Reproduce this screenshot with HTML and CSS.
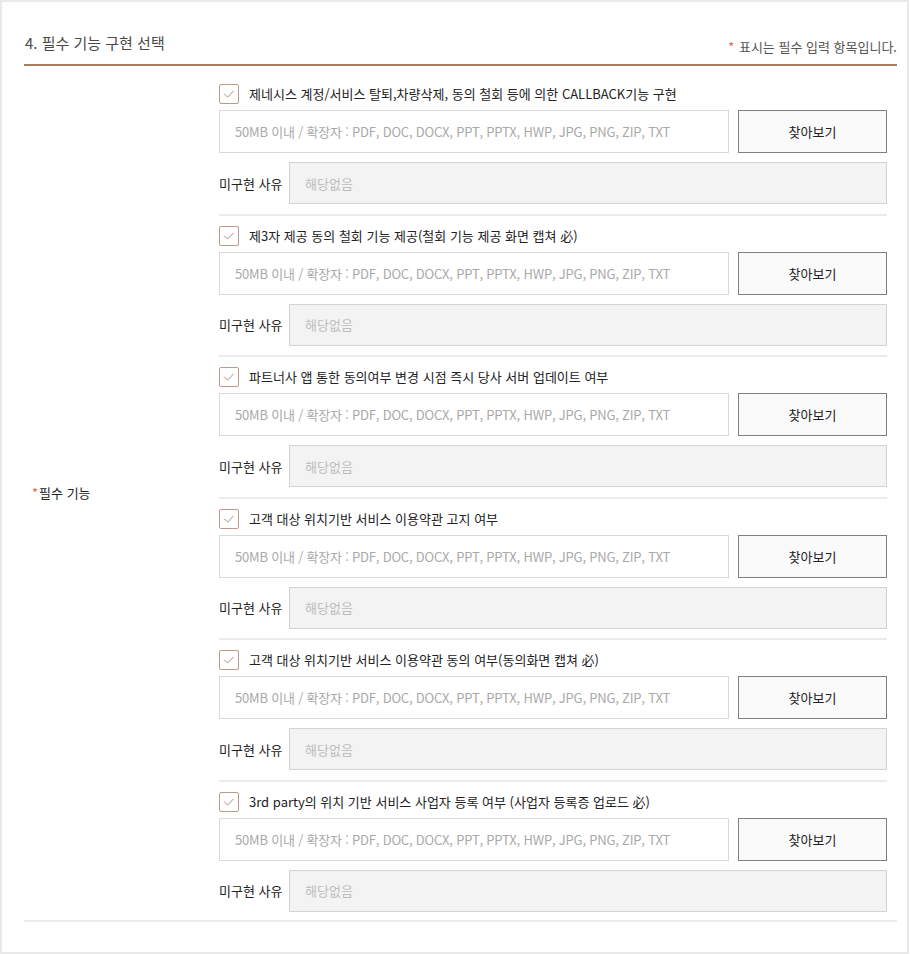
FILE: index.html
```html
<!DOCTYPE html>
<html lang="ko">
  <head>
    <meta charset="UTF-8" />
    <meta name="viewport" content="width=device-width, initial-scale=1.0" />
    <title>필수 기능 구현 선택</title>

    <link rel="stylesheet" href="styles.css">
  </head>

  <body>
    <div class="panel">
      <div class="panel-head">
        <h3>4. 필수 기능 구현 선택</h3>
        <p class="req-note"><span class="req">*</span> 표시는 필수 입력 항목입니다.</p>
      </div>

      <div class="form-table">
        <div class="form-label"><span class="req">*</span>필수 기능</div>

        <div class="form-body">
          <div class="feature">
            <label class="check">
              <span class="box"><svg viewBox="0 0 20 20"><path d="M4.5 9.5 L8.5 13.5 L15 6.5" /></svg></span>
              제네시스 계정/서비스 탈퇴,차량삭제, 동의 철회 등에 의한 CALLBACK기능 구현
            </label>
            <div class="file-row">
              <input type="text" class="file-name" placeholder="50MB 이내 / 확장자 : PDF, DOC, DOCX, PPT, PPTX, HWP, JPG, PNG, ZIP, TXT" readonly />
              <button type="button" class="btn-find">찾아보기</button>
            </div>
            <div class="reason-row">
              <span>미구현 사유</span>
              <input type="text" class="reason" placeholder="해당없음" disabled />
            </div>
          </div>

          <div class="feature">
            <label class="check">
              <span class="box"><svg viewBox="0 0 20 20"><path d="M4.5 9.5 L8.5 13.5 L15 6.5" /></svg></span>
              제3자 제공 동의 철회 기능 제공(철회 기능 제공 화면 캡쳐 必)
            </label>
            <div class="file-row">
              <input type="text" class="file-name" placeholder="50MB 이내 / 확장자 : PDF, DOC, DOCX, PPT, PPTX, HWP, JPG, PNG, ZIP, TXT" readonly />
              <button type="button" class="btn-find">찾아보기</button>
            </div>
            <div class="reason-row">
              <span>미구현 사유</span>
              <input type="text" class="reason" placeholder="해당없음" disabled />
            </div>
          </div>

          <div class="feature">
            <label class="check">
              <span class="box"><svg viewBox="0 0 20 20"><path d="M4.5 9.5 L8.5 13.5 L15 6.5" /></svg></span>
              파트너사 앱 통한 동의여부 변경 시점 즉시 당사 서버 업데이트 여부
            </label>
            <div class="file-row">
              <input type="text" class="file-name" placeholder="50MB 이내 / 확장자 : PDF, DOC, DOCX, PPT, PPTX, HWP, JPG, PNG, ZIP, TXT" readonly />
              <button type="button" class="btn-find">찾아보기</button>
            </div>
            <div class="reason-row">
              <span>미구현 사유</span>
              <input type="text" class="reason" placeholder="해당없음" disabled />
            </div>
          </div>

          <div class="feature">
            <label class="check">
              <span class="box"><svg viewBox="0 0 20 20"><path d="M4.5 9.5 L8.5 13.5 L15 6.5" /></svg></span>
              고객 대상 위치기반 서비스 이용약관 고지 여부
            </label>
            <div class="file-row">
              <input type="text" class="file-name" placeholder="50MB 이내 / 확장자 : PDF, DOC, DOCX, PPT, PPTX, HWP, JPG, PNG, ZIP, TXT" readonly />
              <button type="button" class="btn-find">찾아보기</button>
            </div>
            <div class="reason-row">
              <span>미구현 사유</span>
              <input type="text" class="reason" placeholder="해당없음" disabled />
            </div>
          </div>

          <div class="feature">
            <label class="check">
              <span class="box"><svg viewBox="0 0 20 20"><path d="M4.5 9.5 L8.5 13.5 L15 6.5" /></svg></span>
              고객 대상 위치기반 서비스 이용약관 동의 여부(동의화면 캡쳐 必)
            </label>
            <div class="file-row">
              <input type="text" class="file-name" placeholder="50MB 이내 / 확장자 : PDF, DOC, DOCX, PPT, PPTX, HWP, JPG, PNG, ZIP, TXT" readonly />
              <button type="button" class="btn-find">찾아보기</button>
            </div>
            <div class="reason-row">
              <span>미구현 사유</span>
              <input type="text" class="reason" placeholder="해당없음" disabled />
            </div>
          </div>

          <div class="feature">
            <label class="check">
              <span class="box"><svg viewBox="0 0 20 20"><path d="M4.5 9.5 L8.5 13.5 L15 6.5" /></svg></span>
              3rd party의 위치 기반 서비스 사업자 등록 여부 (사업자 등록증 업로드 必)
            </label>
            <div class="file-row">
              <input type="text" class="file-name" placeholder="50MB 이내 / 확장자 : PDF, DOC, DOCX, PPT, PPTX, HWP, JPG, PNG, ZIP, TXT" readonly />
              <button type="button" class="btn-find">찾아보기</button>
            </div>
            <div class="reason-row">
              <span>미구현 사유</span>
              <input type="text" class="reason" placeholder="해당없음" disabled />
            </div>
          </div>
        </div>
      </div>
    </div>
  </body>
</html>
```

FILE: styles.css
```css
html,
body {
  margin: 0;
  padding: 0;
  background: #fff;
}

body {
  font-family: "Noto Sans CJK KR", "Noto Sans", sans-serif;
  color: #222;
  font-size: 13px;
}

.panel {
  box-sizing: border-box;
  width: 909px;
  height: 954px;
  border: 2px solid #e9e9e9;
  padding: 0 10px 0 22px;
}

.panel-head {
  display: flex;
  justify-content: space-between;
  align-items: flex-end;
  height: 64px;
  box-sizing: border-box;
  padding-bottom: 8px;
  border-bottom: 2px solid #a97c64;
}

.panel-head h3 {
  margin: 0 0 2px 1px;
  font-size: 15px;
  font-weight: normal;
  line-height: 22px;
  color: #4a4a4a;
}

.req-note {
  margin: 0;
  font-size: 13px;
  line-height: 18px;
  color: #555;
}

.req {
  color: #e8665a;
  margin-right: 1px;
}

.form-table {
  display: grid;
  grid-template-columns: 195px 1fr;
  padding-top: 8px;
  border-bottom: 2px solid #ebebeb;
}

.form-label {
  align-self: center;
  padding: 0 0 8px 8px;
  font-size: 13px;
}

.form-body {
  padding-right: 10px;
}

.feature {
  padding: 10px 0 9.6px;
  border-bottom: 2px solid #ebebeb;
}

.feature:last-child {
  border-bottom: none;
  padding-bottom: 8px;
}

.check {
  display: flex;
  align-items: center;
  gap: 10px;
  height: 20px;
  line-height: 20px;
  font-size: 13px;
  color: #222;
}

.box {
  box-sizing: border-box;
  width: 20px;
  height: 20px;
  border: 1px solid #bb9a89;
  border-radius: 2px;
  background: #fff;
}

.box svg {
  display: block;
  width: 18px;
  height: 18px;
  fill: none;
  stroke: #b08e7c;
  stroke-width: 1.1;
}

.file-row {
  display: flex;
  gap: 9px;
  margin-top: 6px;
}

.file-name,
.reason {
  box-sizing: border-box;
  height: 42px;
  padding: 0 15px;
  font-family: inherit;
  font-size: 13px;
  outline: none;
}

.file-name {
  flex-grow: 1;
  height: 43px;
  border: 1px solid #d9d9d9;
  background: #fff;
  letter-spacing: -0.2px;
}

.file-name::placeholder {
  color: #a9a9a9;
}

.btn-find {
  box-sizing: border-box;
  width: 149px;
  height: 43px;
  border: 1px solid #7f7f7f;
  background: #fafafa;
  font-family: inherit;
  font-size: 13px;
  color: #222;
}

.reason-row {
  display: flex;
  align-items: center;
  margin-top: 9px;
}

.reason-row span {
  width: 70px;
  font-size: 13px;
}

.reason {
  flex-grow: 1;
  border: 1px solid #d3d3d3;
  background: #f3f3f3;
}

.reason::placeholder {
  color: #bdbdbd;
}
```
